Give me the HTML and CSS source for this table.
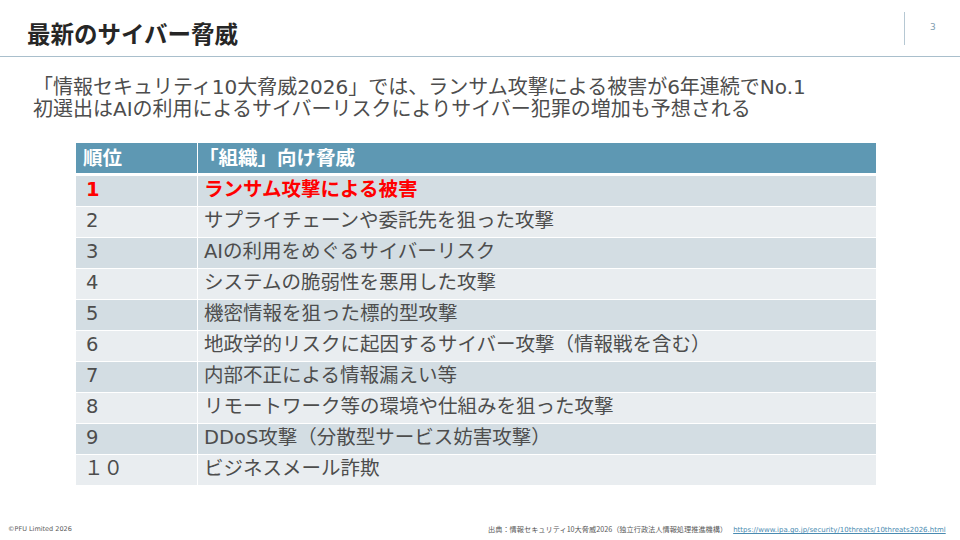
FILE: index.html
```html
<!DOCTYPE html>
<html lang="ja">
<head>
<meta charset="utf-8">
<title>最新のサイバー脅威</title>
<link rel="stylesheet" href="styles.css">
</head>
<body>
<div class="slide">
  <header class="topbar">
    <h1 class="title">最新のサイバー脅威</h1>
    <div class="pageno">3</div>
  </header>
  <p class="lead">「情報セキュリティ10大脅威2026」では、ランサム攻撃による被害が6年連続でNo.1<br>初選出はAIの利用によるサイバーリスクによりサイバー犯罪の増加も予想される</p>
  <div class="rank">
    <div class="cell head c1">順位</div>
    <div class="cell head c2">「組織」向け脅威</div>
    <div class="cell odd c1 top">1</div>
    <div class="cell odd c2 top">ランサム攻撃による被害</div>
    <div class="cell even c1">2</div>
    <div class="cell even c2">サプライチェーンや委託先を狙った攻撃</div>
    <div class="cell odd c1">3</div>
    <div class="cell odd c2">AIの利用をめぐるサイバーリスク</div>
    <div class="cell even c1">4</div>
    <div class="cell even c2">システムの脆弱性を悪用した攻撃</div>
    <div class="cell odd c1">5</div>
    <div class="cell odd c2">機密情報を狙った標的型攻撃</div>
    <div class="cell even c1">6</div>
    <div class="cell even c2">地政学的リスクに起因するサイバー攻撃（情報戦を含む）</div>
    <div class="cell odd c1">7</div>
    <div class="cell odd c2">内部不正による情報漏えい等</div>
    <div class="cell even c1">8</div>
    <div class="cell even c2">リモートワーク等の環境や仕組みを狙った攻撃</div>
    <div class="cell odd c1">9</div>
    <div class="cell odd c2">DDoS攻撃（分散型サービス妨害攻撃）</div>
    <div class="cell even c1 wide">１０</div>
    <div class="cell even c2">ビジネスメール詐欺</div>
  </div>
  <footer class="foot">
    <div class="copy">©PFU Limited 2026</div>
    <div class="source">出典：情報セキュリティ10大脅威2026（独立行政法人情報処理推進機構）<span class="link">https://www.ipa.go.jp/security/10threats/10threats2026.html</span></div>
  </footer>
</div>
</body>
</html>
```
FILE: styles.css
```css
html, body {
  margin: 0;
  padding: 0;
  background: #ffffff;
}
.slide {
  width: 960px;
  height: 540px;
  display: flex;
  flex-direction: column;
  font-family: "DejaVu Sans", "Noto Sans CJK JP", sans-serif;
  color: #4d4d4d;
  overflow: hidden;
}
.topbar {
  height: 57px;
  box-sizing: border-box;
  border-bottom: 1px solid #a9bfcc;
  display: flex;
  align-items: flex-start;
  padding-left: 27px;
}
.title {
  margin: 18px 0 0 0;
  font-family: "Noto Sans CJK JP", sans-serif;
  font-size: 23.5px;
  line-height: 30px;
  font-weight: 700;
  color: #262626;
}
.pageno {
  margin: 12px 0 0 auto;
  width: 56px;
  height: 33px;
  box-sizing: border-box;
  border-left: 1px solid #b6c8d3;
  padding-left: 25px;
  font-size: 9px;
  line-height: 31px;
  color: #7f9db0;
}
.lead {
  margin: 19px 0 0 0;
  padding-left: 33px;
  font-size: 20px;
  line-height: 22px;
  color: #4d4d4d;
}
.rank {
  margin: 23px 0 0 76px;
  width: 800px;
  display: grid;
  grid-template-columns: 121px 1fr;
  column-gap: 1px;
  row-gap: 1px;
}
.cell {
  height: 30px;
  box-sizing: border-box;
  font-size: 19.5px;
  line-height: 27px;
  white-space: nowrap;
  color: #4d4d4d;
}
.c1 { padding-left: 10px; }
.c2 { padding-left: 6px; }
.c1.wide { padding-left: 8px; }
.head {
  height: 30px;
  margin-bottom: 2px;
  background: #5e98b3;
  color: #ffffff;
  font-weight: 700;
  font-family: "Noto Sans CJK JP", sans-serif;
  line-height: 28px;
}
.head.c1 { padding-left: 7px; }
.head.c2 { padding-left: 1px; }
.odd { background: #d3dde3; }
.even { background: #e9edf0; }
.cell.top {
  color: #ff0000;
  font-weight: 700;
}
.foot {
  margin-top: auto;
  display: grid;
  grid-template-columns: 480px 1fr;
  padding: 0 0 5px 8px;
  font-size: 7px;
  line-height: 10px;
  color: #595959;
}
.copy {
  font-size: 6.5px;
}
.source {
  font-family: "Noto Sans CJK JP", sans-serif;
  font-size: 7.2px;
  white-space: nowrap;
}
.link {
  margin-left: 6px;
  color: #4a8bb1;
  text-decoration: underline;
  font-family: "DejaVu Sans", sans-serif;
  font-size: 7px;
}
```
